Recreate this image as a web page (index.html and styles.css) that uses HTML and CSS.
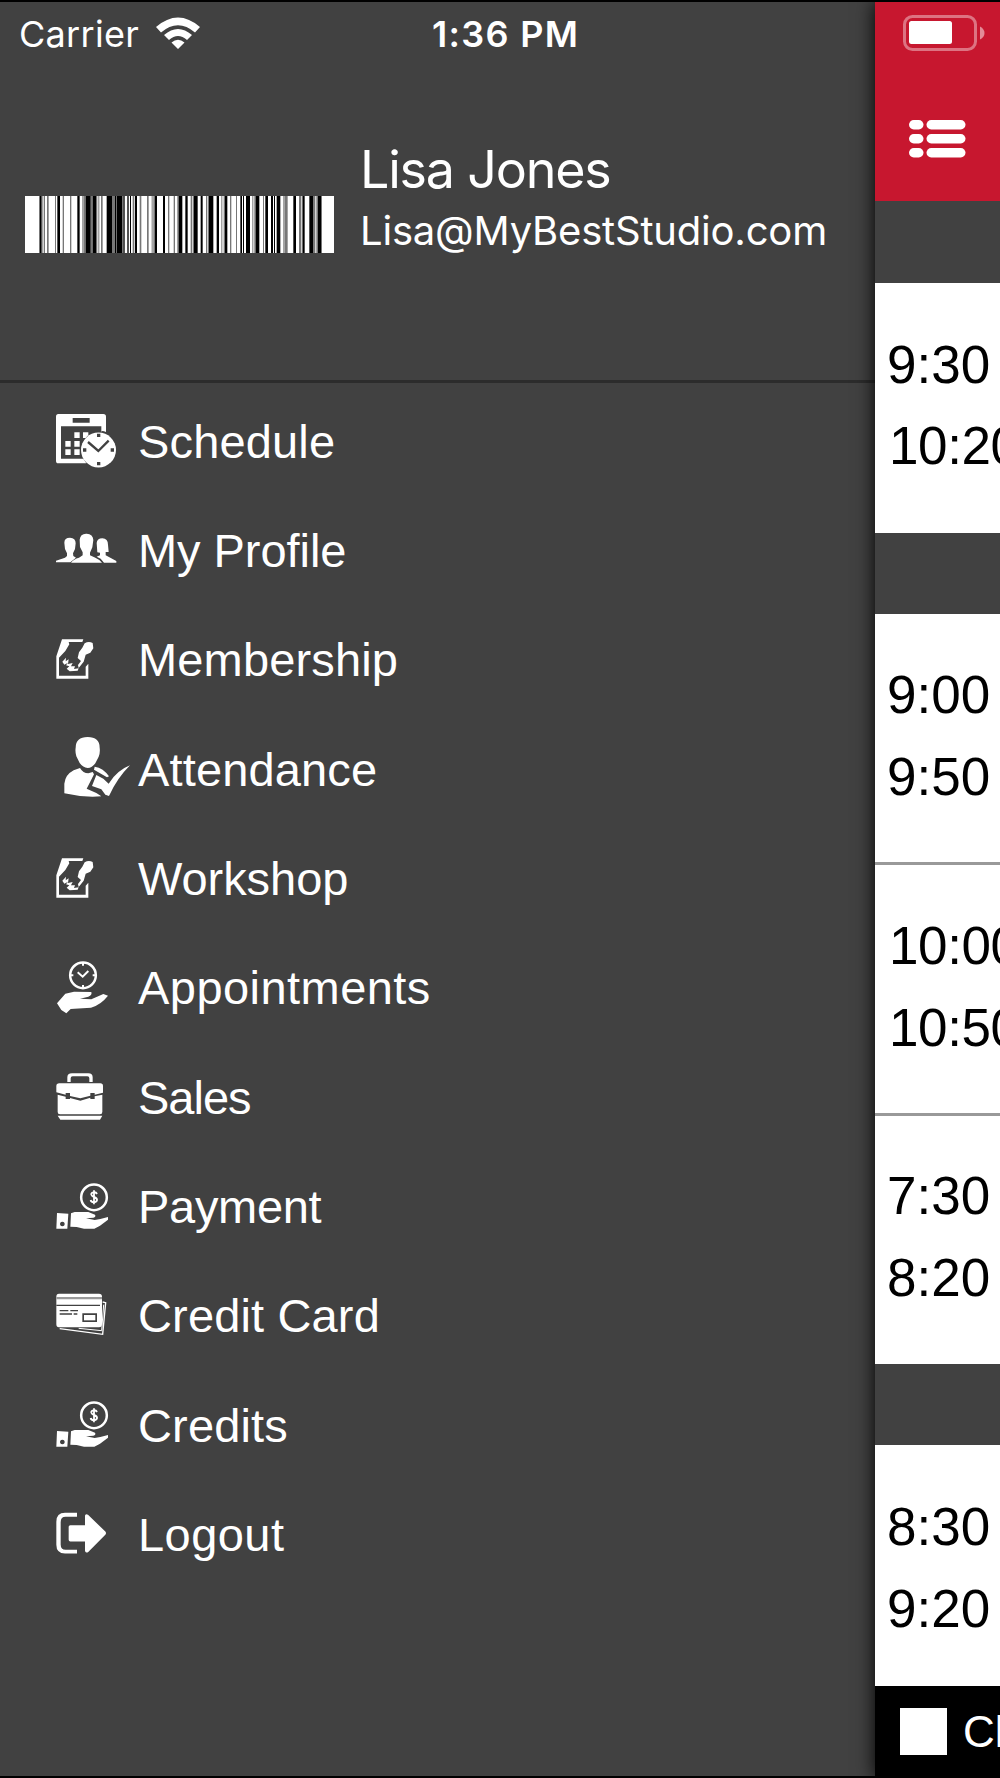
FILE: index.html
```html
<!DOCTYPE html>
<html lang="en">
<head>
<meta charset="utf-8">
<title>Studio menu</title>
<link rel="stylesheet" href="styles.css">
</head>
<body>
<svg class="defs" width="0" height="0" aria-hidden="true">
  <symbol id="sign" viewBox="48 14 222 210">
    <path d="M66 57H130L127 65H86L88 72L76 92L57 112V166H137V139L145 130V175H49V108Z"/>
    <path d="M134 69Q146 61 158 68L160 84L151 97L137 103L131 124L116 143L114 134L123 122L113 113L117 96L127 82Z"/>
    <path d="M67 124L78 112L77 123L86 117L84 131L98 128L93 138L105 138L102 146L116 144L113 151L89 153L80 145L88 138L78 135L84 127L73 133Z"/>
  </symbol>
  <symbol id="pay" viewBox="48 4 222 210">
    <circle class="ring" cx="162" cy="80" r="38.5" stroke-width="7.5"/>
    <path class="ring" stroke-width="5.5" d="M171 70Q168 64 161 65Q153 66 154 72Q155 77 162 79Q172 82 171 89Q169 95 161 95Q153 94 152 88M162 59V101"/>
    <path fill-rule="evenodd" d="M51 127L85 129L82 174H49ZM67 153A7 7 0 1 0 67.1 153Z"/>
    <path d="M93 128L104 124H145L165 132Q169 138 160 141L138 143L164 148L181 145L204 139V147L180 165L163 174H132L110 169L91 168Z"/>
  </symbol>
</svg>
<div class="screen">
  <aside class="drawer">
    <div class="status">
      <span class="carrier">Carrier</span>
      <svg class="wifi" width="46" height="32" viewBox="0 0 46 32">
        <path d="M1 10Q23 -9 45 10L40 15.500Q23 1 6 15.500ZM9 18Q23 6 37 18L32 23Q23 15 14 23ZM16.500 25.500Q23 20 29.500 25.500L23 32Z"/>
      </svg>
      <span class="clock">1:36 PM</span>
    </div>
    <header class="profile">
      <svg class="barcode" width="309" height="57" viewBox="75 0 927 57" preserveAspectRatio="none">
        <rect class="paper" x="75" width="927" height="57"/>
        <path class="soft" d="M117 0h3v57h-3zM127 0h3v57h-3zM132 0h3v57h-3zM141 0h5v57h-5zM165 0h3v57h-3zM188 0h4v57h-4zM210 0h4v57h-4zM247 0h4v57h-4zM252 0h5v57h-5zM272 0h6v57h-6zM289 0h3v57h-3zM295 0h3v57h-3zM303 0h5v57h-5zM336 0h9v57h-9zM349 0h2v57h-2zM366 0h6v57h-6zM398 0h5v57h-5zM419 0h5v57h-5zM441 0h5v57h-5zM455 0h3v57h-3zM460 0h5v57h-5zM504 0h4v57h-4zM521 0h4v57h-4zM532 0h4v57h-4zM572 0h5v57h-5zM579 0h3v57h-3zM618 0h4v57h-4zM624 0h3v57h-3zM664 0h3v57h-3zM671 0h4v57h-4zM690 0h4v57h-4zM708 0h3v57h-3zM757 0h3v57h-3zM763 0h4v57h-4zM789 0h3v57h-3zM795 0h3v57h-3zM850 0h4v57h-4zM855 0h8v57h-8zM897 0h6v57h-6zM905 0h3v57h-3zM939 0h7v57h-7zM949 0h5v57h-5zM963 0h3v57h-3z"/>
        <path d="M120 0h5v57h-5zM172 0h8v57h-8zM232 0h7v57h-7zM257 0h15v57h-15zM278 0h11v57h-11zM320 0h16v57h-16zM345 0h4v57h-4zM351 0h15v57h-15zM371 0h3v57h-3zM382 0h4v57h-4zM390 0h3v57h-3zM405 0h6v57h-6zM465 0h6v57h-6zM489 0h6v57h-6zM536 0h11v57h-11zM556 0h7v57h-7zM582 0h11v57h-11zM602 0h6v57h-6zM627 0h13v57h-13zM650 0h7v57h-7zM675 0h7v57h-7zM721 0h5v57h-5zM729 0h3v57h-3zM738 0h12v57h-12zM767 0h11v57h-11zM797 0h7v57h-7zM813 0h6v57h-6zM822 0h3v57h-3zM830 0h11v57h-11zM880 0h8v57h-8zM908 0h6v57h-6zM928 0h11v57h-11zM954 0h9v57h-9z"/>
      </svg>
      <div class="who">
        <div class="name">Lisa Jones</div>
        <div class="mail">Lisa@MyBestStudio.com</div>
      </div>
    </header>
    <nav class="menu">
      <a class="item"><svg class="icon" viewBox="48 18 222 210">
        <path fill-rule="evenodd" d="M55 42H190Q198 42 198 50V96Q185 90 184 96V79H63V176H130L139 190H55Q48 190 48 182V50Q48 42 55 42ZM98 54V68H149V54Z"/>
        <path d="M103 97h16v17h-16zM129 97h16v8l-8 9h-8zM76 123h16v17h-16zM103 123h16v17h-16zM76 148h16v17h-16zM103 148h16v17h-16z"/>
        <circle cx="175.500" cy="150" r="52.500"/>
        <path class="cut" stroke-width="7" d="M144 126L175 153L206 122"/>
        <path class="hole" d="M171 101h10v10h-10zM171 186h10v10h-10zM129 145h10v10h-10zM212 145h10v10h-10z"/>
      </svg><span class="label">Schedule</span></a>
      <a class="item"><svg class="icon" viewBox="48 346 222 210">
        <path d="M73 426Q73 411 90 411Q107 412 107 428L105 445L99 458L100 466L108 471L91 485H48V480L75 471L81 466V458L75 445ZM170 427Q171 413 187 413Q204 414 204 432L206 454H197V464L229 481V486H192L182 474L170 468L180 464V456L172 455Z"/>
        <path d="M119 417Q121 398 140 399Q159 400 160 418L157 440L150 456V464L166 471Q180 477 186 486H93Q101 475 117 471L128 464V455L120 439Z"/>
      </svg><span class="label snug">My Profile</span></a>
      <a class="item"><svg class="icon"><use href="#sign"/></svg><span class="label">Membership</span></a>
      <a class="item"><svg class="icon" viewBox="48 342 222 210">
        <path d="M107 383Q107 351 143 351Q179 351 179 383Q181 398 176 410L166 430Q156 444 143 444Q129 443 119 429L109 409Q105 395 107 383Z"/>
        <path d="M120 444Q129 460 145 460L158 456L162 463L153 481L140 506L169 519L184 529Q128 533 73 520V491Q76 464 101 451Z"/>
        <path d="M164 440Q190 444 207 469L201 472L162 449ZM169 465L190 476L206 491Q231 451 270 436Q231 475 207 528L196 524L184 508L156 498Z"/>
      </svg><span class="label">Attendance</span></a>
      <a class="item"><svg class="icon"><use href="#sign"/></svg><span class="label snug">Workshop</span></a>
      <a class="item"><svg class="icon" viewBox="48 338 222 210">
        <circle class="ring" cx="129" cy="405" r="38.5" stroke-width="7.5"/>
        <path class="ring" stroke-width="6" d="M113 396L128 409L145 392M129 367v9M129 434v9M91 405h9M158 405h9"/>
        <path d="M51 489L76 460L102 454L154 455Q157 464 145 469L120 475L154 477L190 461L204 466Q183 493 153 502L103 505L92 506L79 519L64 509Z"/>
      </svg><span class="label wide">Appointments</span></a>
      <a class="item"><svg class="icon" viewBox="48 666 222 210">
        <path d="M82 726V712Q82 700 96 700H145Q158 700 158 712V726H148V715Q148 709 142 709H98Q92 709 92 715V726ZM58 730H181Q189 730 189 738V758L164 764V759H151V767L121 775L90 768V759H77V764L49 757V738Q49 730 58 730Z"/>
        <path d="M53 764L77 770V777H90V774L121 782L151 773V777H164V769L187 764V816Q187 823 180 823H60Q53 823 53 816ZM53 827H187L180 839H61Z"/>
      </svg><span class="label tight">Sales</span></a>
      <a class="item"><svg class="icon"><use href="#pay"/></svg><span class="label close">Payment</span></a>
      <a class="item"><svg class="icon" viewBox="48 332 222 210">
        <path fill-rule="evenodd" d="M57 370H177Q186 370 186 379V462Q186 471 177 471H57Q49 471 49 462V379Q49 370 57 370ZM127 429V455H171V429Z"/>
        <path class="paper" d="M132 434h34v16h-34z"/>
        <path class="dim" d="M49 380H186V387H49Z"/>
        <path class="hole" d="M49 403H180V407H49ZM59 419H85V423H59ZM91 419H114V423H91ZM59 429H96V433H59ZM101 429H112V433H101Z"/>
        <path class="ring" stroke-width="4" d="M188 395L197 397L188 492L59 475"/>
        <path class="ring" stroke-width="3" d="M191 403L185 481L116 474"/>
      </svg><span class="label">Credit Card</span></a>
      <a class="item"><svg class="icon"><use href="#pay"/></svg><span class="label">Credits</span></a>
      <a class="item"><svg class="icon" viewBox="48 328.500 222 210">
        <path d="M111 367H75Q49 367 49 394V463Q49 489 75 489H111V478H77Q62 478 62 462V395Q62 379 77 379H111ZM91 404H135V376Q136 368 144 373L196 423Q200 428 196 433L144 485Q136 489 135 481V453H91Q86 453 86 448V409Q86 404 91 404Z"/>
      </svg><span class="label wide">Logout</span></a>
    </nav>
  </aside>
  <main class="main">
    <div class="topbar">
      <svg class="battery" width="84" height="38" viewBox="0 0 84 38">
        <rect class="case" x="1.500" y="1.500" width="71" height="33" rx="8"/>
        <rect x="6" y="6" width="43" height="23" rx="2.500"/>
        <path class="nub" d="M77 11.500Q81.500 14 81.500 18T77 24.500Z"/>
      </svg>
      <svg class="list" width="57" height="38" viewBox="0 0 57 38">
        <rect width="14.500" height="9.500" rx="4.750"/><rect x="17.500" width="39" height="9.500" rx="4.750"/>
        <rect y="14" width="14.500" height="9.500" rx="4.750"/><rect x="17.500" y="14" width="39" height="9.500" rx="4.750"/>
        <rect y="28" width="14.500" height="9.500" rx="4.750"/><rect x="17.500" y="28" width="39" height="9.500" rx="4.750"/>
      </svg>
    </div>
    <div class="day first"></div>
    <div class="slot single"><div>9:30</div><div class="ten">10:20</div></div>
    <div class="day"></div>
    <div class="slot"><div>9:00</div><div>9:50</div></div>
    <div class="slot"><div class="ten">10:00</div><div class="ten">10:50</div></div>
    <div class="slot last"><div>7:30</div><div>8:20</div></div>
    <div class="day"></div>
    <div class="slot rest"><div>8:30</div><div>9:20</div></div>
    <div class="footer"><span class="box"></span><span>Cl</span></div>
  </main>
</div>
</body>
</html>
```
FILE: styles.css
```css
* { box-sizing: border-box; }
body { margin: 0; background: #000; }
svg { display: block; fill: #fff; flex: none; }
.defs { display: none; }
.screen {
  display: flex;
  width: 1000px;
  height: 1778px;
  padding-top: 2px;
  overflow: hidden;
  background: #000;
  color: #fff;
}
.drawer {
  flex: none;
  width: 875px;
  height: 1774px;
  background: #414141;
}
.status {
  display: flex;
  height: 64px;
  padding-left: 19px;
  font: 36px/64px Inter, sans-serif;
  white-space: nowrap;
}
.carrier { width: 136px; letter-spacing: .3px; }
.wifi { margin-top: 15px; }
.clock { margin-left: 231px; font-weight: 600; letter-spacing: 1.300px; }
.profile {
  display: flex;
  height: 317px;
  padding-left: 25px;
  border-bottom: 3px solid #2c2c2c;
  font-family: Inter, sans-serif;
  white-space: nowrap;
}
.barcode { margin-top: 130px; fill: #000; }
.paper { fill: #fff; }
.soft { fill: #777; }
.who { margin: 71px 0 0 26px; }
.name { font-size: 52px; line-height: 66px; letter-spacing: -1.200px; }
.mail { font-size: 40px; line-height: 60px; margin-top: -2px; letter-spacing: -.2px; }
.menu { padding: 3.500px 0 0 56px; }
.item { display: flex; align-items: center; height: 109.350px; }
.icon { width: 74px; height: 70px; margin-right: 8px; }
.label {
  padding-top: 1px;
  font: 47px/60px "Liberation Sans", Arial, sans-serif;
  letter-spacing: .15px;
  white-space: nowrap;
}
.wide { letter-spacing: .45px; }
.snug { letter-spacing: -.05px; }
.close { letter-spacing: -.3px; }
.tight { letter-spacing: -1px; }
.ring { fill: none; stroke: #fff; }
.cut { fill: none; stroke: #414141; }
.hole { fill: #414141; }
.dim { fill: #999; }
.main {
  position: relative;
  flex: none;
  display: flex;
  flex-direction: column;
  width: 125px;
  height: 1776px;
  background: #fff;
  box-shadow: 0 0 18px #000;
}
.topbar { flex: none; height: 199px; background: #c7172f; padding: 13px 0 0 28px; }
.case { fill: none; stroke: #fff; stroke-width: 3px; opacity: .4; }
.nub { opacity: .5; }
.list { margin: 67px 0 0 6px; }
.day { flex: none; height: 81px; background: #414141; }
.first { height: 82px; }
.slot {
  flex: none;
  height: 251px;
  padding: 40px 0 0 12px;
  border-bottom: 3px solid #999;
  color: #000;
  font: 53px/81.500px "Liberation Sans", Arial, sans-serif;
  overflow: hidden;
}
.ten { padding-left: 2px; letter-spacing: -.4px; }
.single { height: 250px; border: 0; padding-top: 40.500px; }
.last { height: 248px; border: 0; padding-top: 39px; }
.rest { height: 241px; border: 0; padding-top: 41px; }
.footer {
  flex: 1;
  display: flex;
  gap: 16px;
  padding: 21.500px 0 0 25px;
  background: #000;
  overflow: hidden;
  font: 44px/47px "Liberation Sans", Arial, sans-serif;
}
.box { flex: none; width: 47px; height: 47px; background: #fff; }
```
